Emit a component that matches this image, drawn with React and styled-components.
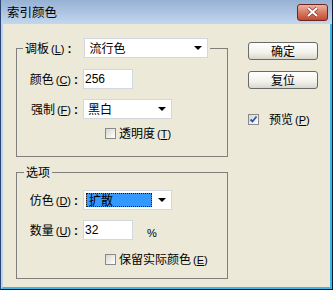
import React from 'react';
import styled, { createGlobalStyle } from 'styled-components';

const Global = createGlobalStyle`
  html, body { margin: 0; padding: 0; background: #ece9d8; }
  body { font-family: "Noto Sans CJK SC", "Liberation Sans", sans-serif; font-size: 12px; color: #000; }
`;

const Window = styled.div`
  width: 333px;
  height: 290px;
  box-sizing: border-box;
  display: flex;
  flex-direction: column;
  border-left: 1px solid #2c4670;
  border-right: 1px solid #0e1a30;
  border-bottom: 1px solid #0e1a30;
`;

const TitleBar = styled.div`
  height: 24px;
  flex: none;
  display: flex;
  align-items: center;
  justify-content: space-between;
  padding: 0 4px 0 6px;
  background: linear-gradient(#96b1d4, #c3d7ee);
  font-size: 12.5px;
  line-height: 14px;
`;

const CloseButton = styled.div`
  width: 29px;
  height: 15px;
  border: 1px solid #6e261b;
  border-radius: 3px;
  background: linear-gradient(#eab3a3, #d77a63 50%, #c24a33);
  display: flex;
  align-items: center;
  justify-content: center;
`;

const Body = styled.div`
  flex: 1;
  display: flex;
  background: #ece9d8;
  border-left: 2px solid #bcd2ee;
  border-right: 2px solid #3fb5e6;
  border-bottom: 2px solid #3fb5e6;
  padding: 14px 0 0 13px;
  gap: 20px;
`;

const LeftCol = styled.div`
  width: 212px;
  display: flex;
  flex-direction: column;
`;

const Group = styled.fieldset`
  margin: ${(p) => p.$top || 0}px 0 0;
  padding: 0 0 ${(p) => p.$bottom}px;
  border: 1px solid #7f7f7f;
  min-width: 0;
`;

const Legend = styled.legend`
  margin-left: ${(p) => p.$left}px;
  padding: 0 2px;
  display: flex;
  align-items: center;
  gap: 13px;
  line-height: 14px;
`;

const Rows = styled.div`
  display: flex;
  flex-direction: column;
  gap: 10px;
  margin-top: 11px;
`;

const Row = styled.div`
  display: flex;
  align-items: center;
  gap: 5px;
`;

const Label = styled.span`
  width: ${(p) => (p.$w ? `${p.$w}px` : 'auto')};
  display: flex;
  justify-content: flex-end;
  align-items: baseline;
  line-height: 14px;
  white-space: nowrap;
`;

const Mnemonic = styled.span`
  margin-left: 2px;
  font-family: "Liberation Sans", sans-serif;
  font-size: 11px;
`;

const Key = styled.span`
  text-decoration: underline;
`;

const Colon = styled.span`
  margin-left: 3px;
  font-family: "Liberation Sans", sans-serif;
  font-weight: bold;
`;

const Select = styled.div`
  width: ${(p) => p.$w}px;
  height: 20px;
  box-sizing: border-box;
  background: #fff;
  border: 1px solid #d3d8de;
  display: flex;
  align-items: center;
  justify-content: space-between;
  padding: 0 5px 0 ${(p) => (p.$focus ? 2 : 4)}px;
  line-height: 14px;
`;

const Highlight = styled.span`
  width: 66px;
  height: 14px;
  box-sizing: border-box;
  background: #3399ff;
  border: 1px dotted #1a1a1a;
  padding-left: 2px;
  line-height: 12px;
`;

const Arrow = styled.span`
  width: 0;
  height: 0;
  border-left: 4px solid transparent;
  border-right: 4px solid transparent;
  border-top: 4px solid #000;
`;

const TextInput = styled.div`
  width: 50px;
  height: 20px;
  box-sizing: border-box;
  background: #fff;
  border: 1px solid #d3d8de;
  padding: 2px 0 0 1px;
  font-family: "Liberation Sans", sans-serif;
  font-size: 12px;
  line-height: 14px;
`;

const Unit = styled.span`
  margin-left: 9px;
  margin-top: 5px;
  font-family: "Liberation Sans", sans-serif;
  font-size: 11px;
`;

const CheckRow = styled.div`
  display: flex;
  align-items: center;
  gap: ${(p) => p.$gap || 3}px;
  margin-top: ${(p) => p.$top || 0}px;
  padding-left: ${(p) => p.$left || 0}px;
  line-height: 14px;
`;

const Box = styled.span`
  width: 11px;
  height: 11px;
  box-sizing: border-box;
  border: 1px solid #8a8a8a;
  background: linear-gradient(135deg, #d8d8d0, #ffffff);
  display: flex;
  align-items: center;
  justify-content: center;
`;

const RightCol = styled.div`
  width: 70px;
  display: flex;
  flex-direction: column;
  padding-top: 4px;
`;

const Button = styled.div`
  height: 18px;
  box-sizing: border-box;
  margin-bottom: 11px;
  border: 1px solid #6a6a6a;
  border-radius: 3px;
  background: linear-gradient(#ffffff, #f2f1ea 60%, #d9d6cc);
  display: flex;
  align-items: center;
  justify-content: center;
  line-height: 14px;
`;

function Check({ checked }) {
  return (
    <Box>
      {checked && (
        <svg width="9" height="9" viewBox="0 0 9 9">
          <path d="M1.5 4.5 L3.5 6.5 L7.5 1.5" stroke="#2a54b0" strokeWidth="1.8" fill="none" />
        </svg>
      )}
    </Box>
  );
}

function Caption({ text, k, colon = true, w }) {
  return (
    <Label $w={w}>
      {text}
      <Mnemonic>
        (<Key>{k}</Key>)
      </Mnemonic>
      {colon && <Colon>:</Colon>}
    </Label>
  );
}

export default function App() {
  return (
    <>
      <Global />
      <Window>
        <TitleBar>
          <span>索引颜色</span>
          <CloseButton>
            <svg width="13" height="10" viewBox="0 0 13 10">
              <path d="M2 1 L11 9 M11 1 L2 9" stroke="#7a3a30" strokeWidth="3.4" />
              <path d="M2 1 L11 9 M11 1 L2 9" stroke="#fff" strokeWidth="2" />
            </svg>
          </CloseButton>
        </TitleBar>
        <Body>
          <LeftCol>
            <Group $bottom={15}>
              <Legend $left={6}>
                <Caption text="调板" k="L" />
                <Select $w={124}>
                  <span>流行色</span>
                  <Arrow />
                </Select>
              </Legend>
              <Rows>
                <Row>
                  <Caption text="颜色" k="C" w={61} />
                  <TextInput>256</TextInput>
                </Row>
                <Row>
                  <Caption text="强制" k="F" w={61} />
                  <Select $w={89}>
                    <span>黑白</span>
                    <Arrow />
                  </Select>
                </Row>
              </Rows>
              <CheckRow $top={7} $left={88}>
                <Check />
                <Caption text="透明度" k="T" colon={false} />
              </CheckRow>
            </Group>
            <Group $top={8} $bottom={11}>
              <Legend $left={7}>选项</Legend>
              <Rows>
                <Row>
                  <Caption text="仿色" k="D" w={61} />
                  <Select $w={89} $focus>
                    <Highlight>扩散</Highlight>
                    <Arrow />
                  </Select>
                </Row>
                <Row>
                  <Caption text="数量" k="U" w={61} />
                  <TextInput>32</TextInput>
                  <Unit>%</Unit>
                </Row>
              </Rows>
              <CheckRow $top={12} $left={88}>
                <Check />
                <Caption text="保留实际颜色" k="E" colon={false} />
              </CheckRow>
            </Group>
          </LeftCol>
          <RightCol>
            <Button>确定</Button>
            <Button>复位</Button>
            <CheckRow $top={12} $gap={10}>
              <Check checked />
              <Caption text="预览" k="P" colon={false} />
            </CheckRow>
          </RightCol>
        </Body>
      </Window>
    </>
  );
}
